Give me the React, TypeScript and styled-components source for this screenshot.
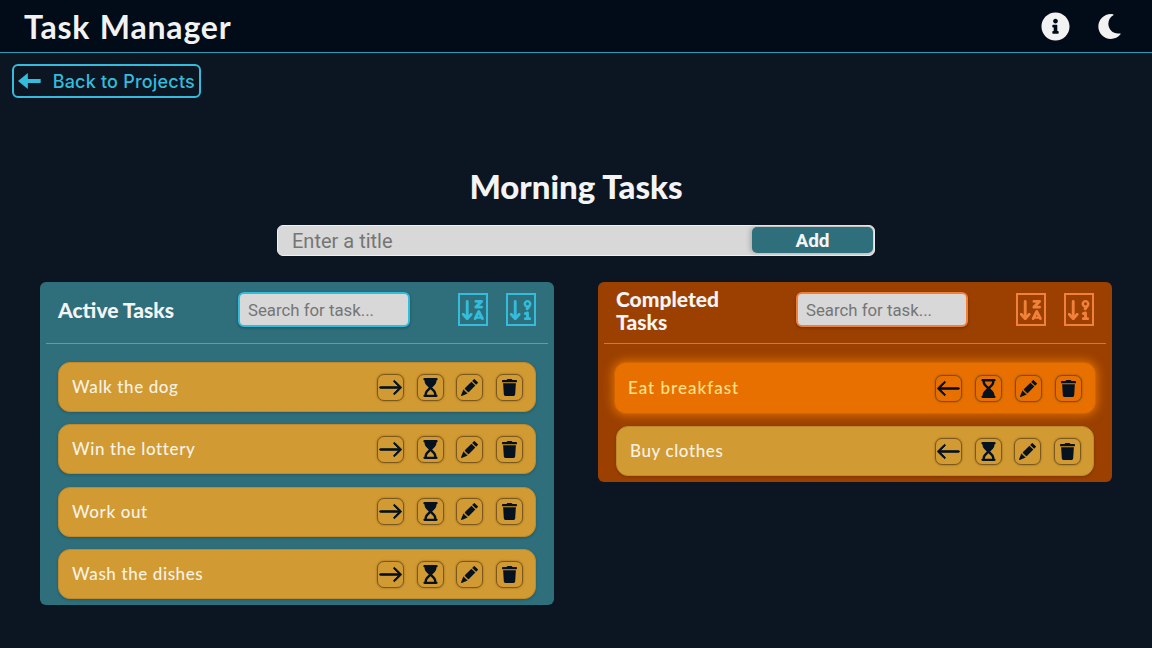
import React from "react";
import styled, { createGlobalStyle } from "styled-components";
import { FaInfoCircle, FaMoon, FaTrash } from "react-icons/fa";
import { FaHourglassStart, FaHourglassEnd, FaArrowDownZA, FaArrowDown91 } from "react-icons/fa6";
import { BsArrowLeft, BsArrowRight, BsPencilFill } from "react-icons/bs";

const GlobalStyle = createGlobalStyle`
  html, body {
    margin: 0;
    padding: 0;
    background: #0c1623;
    font-family: "Lato", "Liberation Sans", sans-serif;
  }
  * { box-sizing: border-box; }
`;

const Page = styled.div`
  width: 1152px;
  height: 648px;
  overflow: hidden;
  background: #0c1623;
`;

const Header = styled.header`
  height: 53px;
  display: flex;
  align-items: center;
  justify-content: space-between;
  padding: 0 30px 0 24px;
  background: #020b18;
  border-bottom: 1px solid #2a9fb5;
`;

const Logo = styled.div`
  font-size: 32px;
  font-weight: 700;
  letter-spacing: 0.8px;
  word-spacing: 1px;
  color: #f2f2f2;
`;

const HeaderIcons = styled.div`
  display: flex;
  align-items: center;
  gap: 27px;
  color: #f2f2f2;
  line-height: 0;
`;

const BackButton = styled.button`
  display: flex;
  align-items: center;
  gap: 12px;
  width: 189px;
  height: 34px;
  margin: 11px 0 0 12px;
  padding: 0 4px;
  background: transparent;
  border: 2px solid #33bcdb;
  border-radius: 6px;
  color: #33bcdb;
  font-family: "Inter", sans-serif;
  font-size: 18px;
  font-weight: 500;
  letter-spacing: 0.2px;
  white-space: nowrap;
`;

const Title = styled.h1`
  margin: 68px 0 0;
  text-align: center;
  font-size: 33px;
  line-height: 40px;
  font-weight: 900;
  color: #f4f4f4;
`;

const AddBar = styled.form`
  display: flex;
  width: 598px;
  height: 31px;
  margin: 19px auto 0;
  padding: 1px 1px 2px;
  background: #d8d8d8;
  border: 1px solid #f0f0f0;
  border-radius: 6px;
`;

const AddInput = styled.input`
  flex: 1;
  min-width: 0;
  padding: 1px 13px 0;
  border: none;
  outline: none;
  background: transparent;
  font-family: "Roboto", sans-serif;
  font-size: 20px;
  &::placeholder { color: #757575; opacity: 1; }
`;

const AddButton = styled.button`
  width: 121px;
  border: none;
  border-radius: 5px;
  background: #2e6f7b;
  box-shadow: -2px 0 5px rgba(0, 0, 0, 0.2);
  color: #f4f4f4;
  font-family: "Roboto", sans-serif;
  font-size: 19px;
  font-weight: 700;
`;

const Columns = styled.div`
  display: flex;
  align-items: flex-start;
  gap: 44px;
  margin: 26px 0 0 40px;
`;

const Panel = styled.section<{ $bg: string }>`
  width: 514px;
  padding: 0 6px 6px;
  border-radius: 6px;
  background: ${(p) => p.$bg};
`;

const PanelHead = styled.div<{ $line: string }>`
  display: flex;
  align-items: center;
  height: 62px;
  padding: 0 12px 6px;
  border-bottom: 1px solid ${(p) => p.$line};
`;

const PanelTitle = styled.h2`
  width: 180px;
  margin: 0;
  padding-right: 60px;
  font-size: 21px;
  line-height: 23px;
  font-weight: 900;
  color: #f4f4f4;
`;

const Search = styled.input<{ $line: string }>`
  width: 172px;
  height: 35px;
  margin-right: 48px;
  padding: 0 8px;
  background: #d8d8d8;
  border: 2px solid ${(p) => p.$line};
  border-radius: 6px;
  outline: none;
  box-shadow: 0 1px 3px rgba(0, 0, 0, 0.3);
  font-family: "Roboto", sans-serif;
  font-size: 16.8px;
  &::placeholder { color: #757575; opacity: 1; }
`;

const SortBox = styled.div<{ $line: string }>`
  display: flex;
  align-items: center;
  justify-content: center;
  width: 30px;
  height: 33px;
  margin-right: 18px;
  border: 2px solid ${(p) => p.$line};
  color: ${(p) => p.$line};
  font-size: 26px;
  &:last-child { margin-right: 0; }
`;

const TaskList = styled.div`
  display: flex;
  flex-direction: column;
  gap: 12.4px;
  padding: 18px 12px 0;
`;

const TaskRow = styled.div<{ $active?: boolean }>`
  display: flex;
  align-items: center;
  justify-content: space-between;
  height: ${(p) => (p.$active ? "52px" : "50px")};
  margin: ${(p) => (p.$active ? "0 -2px" : "0")};
  padding: 0 ${(p) => (p.$active ? "13px" : "12.5px")} 0 13px;
  border-radius: 12px;
  background: ${(p) => (p.$active ? "#e87000" : "#d19a32")};
  border: 1px solid ${(p) => (p.$active ? "#d06400" : "#c08a2c")};
  box-shadow: ${(p) => (p.$active ? "0 0 10px 2px #d86a00" : "0 1px 3px rgba(0,0,0,0.2)")};
`;

const TaskName = styled.span<{ $active?: boolean }>`
  margin-bottom: 1px;
  font-size: 17px;
  font-weight: 500;
  letter-spacing: ${(p) => (p.$active ? "1px" : "0.6px")};
  color: ${(p) => (p.$active ? "#ffe08a" : "#f6f2e6")};
`;

const TaskActions = styled.div<{ $active?: boolean }>`
  display: flex;
  gap: ${(p) => (p.$active ? "13px" : "12.5px")};
`;

const ActionButton = styled.button`
  display: flex;
  align-items: center;
  justify-content: center;
  width: 27px;
  height: 27px;
  padding: 0;
  background: transparent;
  border: 1px solid rgba(90, 60, 20, 0.7);
  border-radius: 7px;
  box-shadow: 0 0 2px rgba(60, 40, 10, 0.5);
  color: #06121f;
`;

type Task = { name: string; fullGlass?: boolean };

const active: Task[] = [
  { name: "Walk the dog" },
  { name: "Win the lottery" },
  { name: "Work out" },
  { name: "Wash the dishes" },
];

const done: Task[] = [{ name: "Eat breakfast", fullGlass: true }, { name: "Buy clothes" }];

const BackArrow = () => (
  <svg width="23" height="18" viewBox="0 0 23 18" fill="currentColor">
    <path d="M0 9 L10 1 V7 H23 V11 H10 V17 Z" />
  </svg>
);

const Row = ({ task, back, glow }: { task: Task; back?: boolean; glow?: boolean }) => (
  <TaskRow $active={glow}>
    <TaskName $active={glow}>{task.name}</TaskName>
    <TaskActions $active={glow}>
      <ActionButton>
        {back ? (
          <BsArrowLeft size={25} stroke="currentColor" strokeWidth={0.6} />
        ) : (
          <BsArrowRight size={25} stroke="currentColor" strokeWidth={0.6} />
        )}
      </ActionButton>
      <ActionButton>{task.fullGlass ? <FaHourglassEnd size={19} /> : <FaHourglassStart size={19} />}</ActionButton>
      <ActionButton><BsPencilFill size={17} /></ActionButton>
      <ActionButton><FaTrash size={17} /></ActionButton>
    </TaskActions>
  </TaskRow>
);

export default function App() {
  return (
    <Page>
      <GlobalStyle />
      <Header>
        <Logo>Task Manager</Logo>
        <HeaderIcons>
          <FaInfoCircle size={29} />
          <FaMoon size={25} />
        </HeaderIcons>
      </Header>
      <BackButton>
        <BackArrow />
        Back to Projects
      </BackButton>
      <Title>Morning Tasks</Title>
      <AddBar>
        <AddInput placeholder="Enter a title" />
        <AddButton type="button">Add</AddButton>
      </AddBar>
      <Columns>
        <Panel $bg="#2e6f7b">
          <PanelHead $line="#4fa3b3">
            <PanelTitle>Active Tasks</PanelTitle>
            <Search $line="#33bcdb" placeholder="Search for task..." />
            <SortBox $line="#33bcdb"><FaArrowDownZA /></SortBox>
            <SortBox $line="#33bcdb"><FaArrowDown91 /></SortBox>
          </PanelHead>
          <TaskList>
            {active.map((t) => <Row key={t.name} task={t} />)}
          </TaskList>
        </Panel>
        <Panel $bg="#9b4000">
          <PanelHead $line="#e8712a">
            <PanelTitle>Completed Tasks</PanelTitle>
            <Search $line="#f0803a" placeholder="Search for task..." />
            <SortBox $line="#f0803a"><FaArrowDownZA /></SortBox>
            <SortBox $line="#f0803a"><FaArrowDown91 /></SortBox>
          </PanelHead>
          <TaskList>
            {done.map((t, i) => <Row key={t.name} task={t} back glow={i === 0} />)}
          </TaskList>
        </Panel>
      </Columns>
    </Page>
  );
}
